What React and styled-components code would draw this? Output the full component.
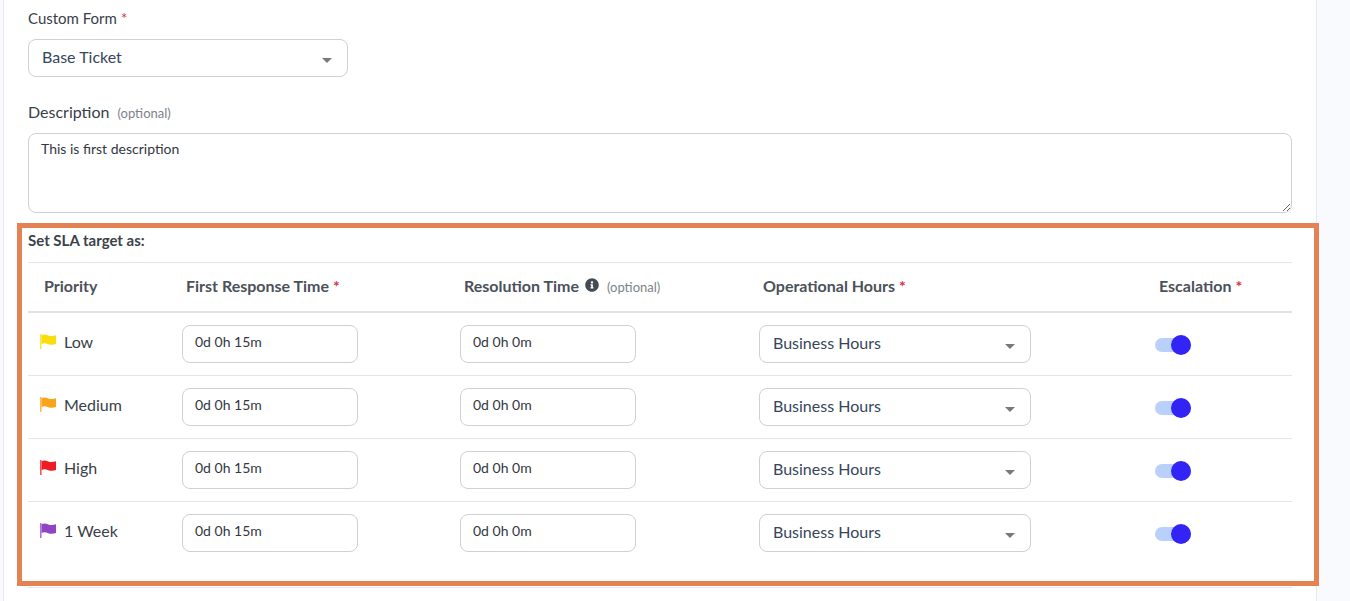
import React from 'react';
import styled, { createGlobalStyle } from 'styled-components';
import { FaInfoCircle } from 'react-icons/fa';

const GlobalStyle = createGlobalStyle`
  html, body {
    margin: 0;
    height: 100%;
    background: #f9fafd;
    font-family: Lato, "Liberation Sans", sans-serif;
    overflow: hidden;
  }
  * {
    box-sizing: border-box;
  }
`;

const Page = styled.div`
  padding-left: 3px;
  height: 601px;
`;

const Card = styled.div`
  width: 1314px;
  height: 601px;
  background: #fff;
  border-left: 1px solid #e7e9ee;
  border-right: 1px solid #e7e9ee;
  padding: 9px 24px 0;
`;

const Field = styled.div`
  display: flex;
  flex-direction: column;
  margin-top: ${(p) => p.$top || 0}px;
`;

const FieldLabel = styled.label`
  font-size: ${(p) => p.$size || 15}px;
  line-height: 18px;
  color: #3a4048;
  margin-bottom: ${(p) => p.$gap || 12}px;
`;

const Required = styled.span`
  color: #d8333b;
  margin-left: 4px;
`;

const Optional = styled.span`
  font-size: 13px;
  font-weight: 400;
  color: #7d838b;
  margin-left: 8px;
  margin-top: ${(p) => p.$top || 0}px;
`;

const SelectBox = styled.div`
  display: flex;
  align-items: center;
  justify-content: space-between;
  width: ${(p) => p.$width}px;
  height: 38px;
  padding: 0 15px 0 13px;
  background: #fff;
  border: 1px solid #cdd1d6;
  border-radius: 8px;
  font-size: 16px;
  color: #36465a;
`;

const SelectText = styled.span`
  margin-top: -4px;
`;

const Caret = styled.span`
  width: 0;
  height: 0;
  margin-top: 5px;
  border-left: 5px solid transparent;
  border-right: 5px solid transparent;
  border-top: 5px solid #77797c;
`;

const DescriptionArea = styled.textarea`
  display: block;
  width: 100%;
  height: 80px;
  padding: 7px 12px;
  background: #fff;
  border: 1px solid #cdd1d6;
  border-radius: 8px;
  font-family: Lato, "Liberation Sans", sans-serif;
  font-size: 14px;
  line-height: 16px;
  color: #33383f;
  outline: none;
`;

const SlaSection = styled.section`
  margin: 10px -27px 0 -11px;
  height: 363px;
  padding: 3px 22px 0 6px;
  border: 5px solid #e58253;
`;

const SectionTitle = styled.div`
  height: 31px;
  font-size: 15px;
  font-weight: 700;
  line-height: 18px;
  color: #3c424a;
`;

const Row = styled.div`
  display: grid;
  grid-template-columns: 154px 278px 299px 396px 137px;
  align-items: center;
`;

const HeaderRow = styled(Row)`
  height: 51px;
  border-top: 1px solid #e3e5e8;
  border-bottom: 2px solid #e0e2e5;
`;

const BodyRow = styled(Row)`
  height: 63px;
  border-bottom: 1px solid ${(p) => (p.$last ? 'transparent' : '#e3e5e8')};
`;

const HeaderCell = styled.div`
  display: flex;
  align-items: center;
  padding: 0 0 4px ${(p) => p.$left || 4}px;
  font-size: 16px;
  font-weight: 700;
  color: #4b5159;
`;

const InfoIcon = styled(FaInfoCircle)`
  width: 14px;
  height: 14px;
  margin: -1px 0 0 6px;
  color: #454b53;
`;

const PriorityCell = styled.div`
  display: flex;
  align-items: center;
  gap: 8px;
  padding: 0 0 6px 12px;
  font-size: 16px;
  color: #3a4048;
`;

const FlagIcon = styled.svg`
  width: 16px;
  height: 16px;
  margin-top: 1px;
  flex: none;
`;

const TimeInput = styled.input`
  display: block;
  width: 176px;
  height: 38px;
  padding: 0 12px 6px;
  background: #fff;
  border: 1px solid #cdd1d6;
  border-radius: 8px;
  font-family: Lato, "Liberation Sans", sans-serif;
  font-size: 14px;
  color: #33383f;
  outline: none;
`;

const Toggle = styled.div`
  position: relative;
  width: 36px;
  height: 14px;
  margin-top: 2px;
  background: #b9d0fb;
  border-radius: 7px;
`;

const Knob = styled.span`
  position: absolute;
  top: -3px;
  right: 0;
  width: 20px;
  height: 20px;
  background: #3224f5;
  border-radius: 50%;
`;

const BottomRule = styled.div`
  height: 1px;
  margin-top: 1px;
  background: #e6e8eb;
`;

function Flag({ color }) {
  return (
    <FlagIcon viewBox="0 0 16 16" aria-hidden="true">
      <rect x="0" y="0" width="1.6" height="15" fill={color} opacity="0.75" />
      <path d="M1.6 1.2C4 0 6 0.6 8.2 1.4 10.6 2.2 13 2.2 16 1.2V10C13 11 10.6 11 8.2 10.2 6 9.4 4 8.9 1.6 10Z" fill={color} />
    </FlagIcon>
  );
}

function Select({ value, width }) {
  return (
    <SelectBox $width={width}>
      <SelectText>{value}</SelectText>
      <Caret />
    </SelectBox>
  );
}

const priorities = [
  { name: 'Low', color: '#fbdc0c' },
  { name: 'Medium', color: '#f9a41b' },
  { name: 'High', color: '#ee1c25' },
  { name: '1 Week', color: '#9145c4' },
];

export default function App() {
  return (
    <Page>
      <GlobalStyle />
      <Card>
        <Field>
          <FieldLabel $gap={12}>
            Custom Form<Required>*</Required>
          </FieldLabel>
          <Select value="Base Ticket" width={320} />
        </Field>
        <Field $top={26}>
          <FieldLabel $size={16} $gap={11}>
            Description<Optional>(optional)</Optional>
          </FieldLabel>
          <DescriptionArea defaultValue="This is first description" />
        </Field>
        <SlaSection>
          <SectionTitle>Set SLA target as:</SectionTitle>
          <HeaderRow>
            <HeaderCell $left={16}>Priority</HeaderCell>
            <HeaderCell>
              First Response Time<Required>*</Required>
            </HeaderCell>
            <HeaderCell>
              Resolution Time
              <InfoIcon />
              <Optional $top={3}>(optional)</Optional>
            </HeaderCell>
            <HeaderCell>
              Operational Hours<Required>*</Required>
            </HeaderCell>
            <HeaderCell>
              Escalation<Required>*</Required>
            </HeaderCell>
          </HeaderRow>
          {priorities.map((p, i) => (
            <BodyRow key={p.name} $last={i === priorities.length - 1}>
              <PriorityCell>
                <Flag color={p.color} />
                {p.name}
              </PriorityCell>
              <TimeInput defaultValue="0d 0h 15m" />
              <TimeInput defaultValue="0d 0h 0m" />
              <Select value="Business Hours" width={272} />
              <Toggle>
                <Knob />
              </Toggle>
            </BodyRow>
          ))}
        </SlaSection>
        <BottomRule />
      </Card>
    </Page>
  );
}
